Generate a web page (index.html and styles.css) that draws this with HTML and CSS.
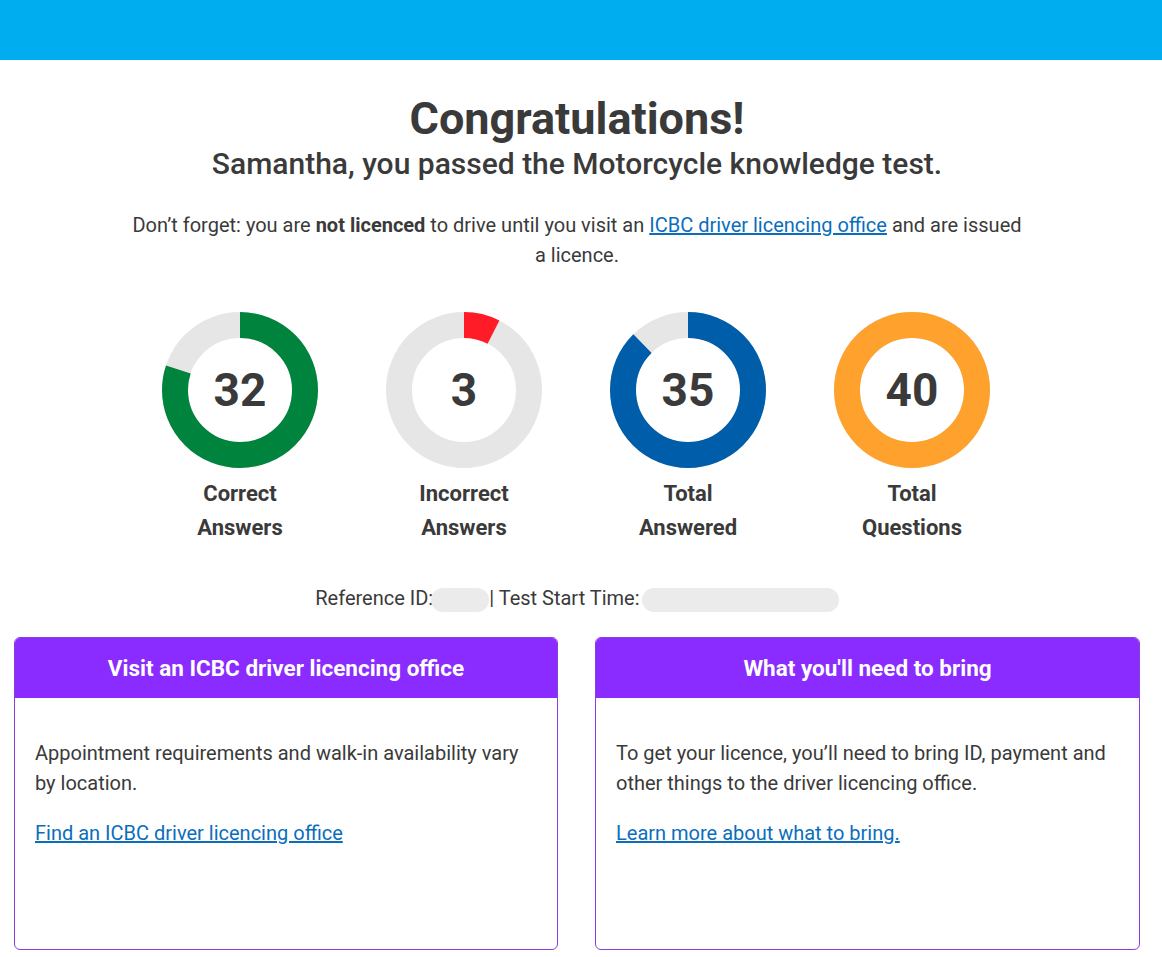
FILE: index.html
```html
<!DOCTYPE html>
<html lang="en">
<head>
    <meta charset="UTF-8">
    <meta name="viewport" content="width=device-width, initial-scale=1.0">
    <title>Knowledge Test Results</title>
    <link rel="stylesheet" href="styles.css">
</head>
<body>
    <header class="topbar"></header>

    <main class="results">
        <h1 class="title">Congratulations!</h1>
        <h2 class="subtitle">Samantha, you passed the Motorcycle knowledge test.</h2>

        <p class="notice">
            Don’t forget: you are <strong>not licenced</strong> to drive until you visit an
            <a href="#">ICBC driver licencing office</a> and are issued a licence.
        </p>

        <div class="stats">
            <div class="stat">
                <div class="donut">
                    <svg viewBox="0 0 156 156">
                        <circle class="track" cx="78" cy="78" r="65"></circle>
                        <circle class="arc green" cx="78" cy="78" r="65" stroke-dasharray="326.7 408.4"></circle>
                    </svg>
                    <span class="donut-value">32</span>
                </div>
                <div class="stat-label">Correct<br>Answers</div>
            </div>
            <div class="stat">
                <div class="donut">
                    <svg viewBox="0 0 156 156">
                        <circle class="track" cx="78" cy="78" r="65"></circle>
                        <circle class="arc red" cx="78" cy="78" r="65" stroke-dasharray="30.6 408.4"></circle>
                    </svg>
                    <span class="donut-value">3</span>
                </div>
                <div class="stat-label">Incorrect<br>Answers</div>
            </div>
            <div class="stat">
                <div class="donut">
                    <svg viewBox="0 0 156 156">
                        <circle class="track" cx="78" cy="78" r="65"></circle>
                        <circle class="arc blue" cx="78" cy="78" r="65" stroke-dasharray="357.4 408.4"></circle>
                    </svg>
                    <span class="donut-value">35</span>
                </div>
                <div class="stat-label">Total<br>Answered</div>
            </div>
            <div class="stat">
                <div class="donut">
                    <svg viewBox="0 0 156 156">
                        <circle class="track" cx="78" cy="78" r="65"></circle>
                        <circle class="arc orange" cx="78" cy="78" r="65" stroke-dasharray="408.4 408.4"></circle>
                    </svg>
                    <span class="donut-value">40</span>
                </div>
                <div class="stat-label">Total<br>Questions</div>
            </div>
        </div>

        <p class="reference">
            Reference ID:<span class="hidden-value short"></span>| Test Start Time: 2<span class="hidden-value long"></span>
        </p>
    </main>

    <section class="cards">
        <div class="card">
            <div class="card-header">Visit an ICBC driver licencing office</div>
            <div class="card-body">
                <p>Appointment requirements and walk-in availability vary by location.</p>
                <p><a href="#">Find an ICBC driver licencing office</a></p>
            </div>
        </div>
        <div class="card">
            <div class="card-header">What you'll need to bring</div>
            <div class="card-body">
                <p>To get your licence, you’ll need to bring ID, payment and other things to the driver licencing office.</p>
                <p><a href="#">Learn more about what to bring.</a></p>
            </div>
        </div>
    </section>
</body>
</html>
```

FILE: styles.css
```css
* {
    margin: 0;
    padding: 0;
    box-sizing: border-box;
}

body {
    font-family: Roboto, 'Liberation Sans', sans-serif;
    color: #3a3a3a;
    background: #fff;
}

a {
    color: #0a6ebd;
    text-decoration: underline;
}

.topbar {
    height: 60px;
    background: #00aeef;
}

.results {
    text-align: center;
    padding: 32px 8px 0 0;
}

.title {
    font-size: 45px;
    font-weight: 700;
    line-height: 54px;
}

.subtitle {
    font-size: 30px;
    font-weight: 500;
    line-height: 36px;
}

.notice {
    max-width: 900px;
    margin: 28px auto 0;
    font-size: 20px;
    line-height: 30px;
}

.notice strong {
    font-weight: 700;
}

.stats {
    display: flex;
    justify-content: center;
    gap: 68px;
    margin-top: 42px;
    margin-left: -2px;
}

.stat {
    width: 156px;
}

.donut {
    position: relative;
    width: 156px;
    height: 156px;
}

.donut svg {
    display: block;
    width: 156px;
    height: 156px;
    transform: rotate(-90deg);
}

.donut circle {
    fill: none;
    stroke-width: 26;
}

.track {
    stroke: #e6e6e6;
}

.arc.green {
    stroke: #00843d;
}

.arc.red {
    stroke: #ff1c27;
}

.arc.blue {
    stroke: #005daa;
}

.arc.orange {
    stroke: #ffa12d;
}

.donut-value {
    position: absolute;
    inset: 0;
    display: flex;
    align-items: center;
    justify-content: center;
    font-size: 46px;
    font-weight: 700;
}

.stat-label {
    margin-top: 9px;
    font-size: 22px;
    font-weight: 700;
    line-height: 34px;
}

.reference {
    margin-top: 40px;
    font-size: 20px;
    line-height: 26px;
}

/* redacted values */
.hidden-value {
    display: inline-block;
    height: 24px;
    vertical-align: middle;
    background: #ebebeb;
    border-radius: 12px;
}

.hidden-value.short {
    width: 58px;
    margin-left: -2px;
}

.hidden-value.long {
    width: 197px;
    margin-left: -14px;
}

.cards {
    display: grid;
    grid-template-columns: 544px 545px;
    gap: 37px;
    padding-left: 14px;
    margin-top: 25px;
}

.card {
    height: 313px;
    border: 1px solid #8a3fd9;
    border-radius: 6px;
    overflow: hidden;
}

.card-header {
    height: 60px;
    display: flex;
    align-items: center;
    justify-content: center;
    background: #8a2bff;
    color: #fff;
    font-size: 22.5px;
    font-weight: 700;
}

.card-body {
    padding: 40px 20px 0;
    font-size: 20px;
    line-height: 30px;
}

.card-body p + p {
    margin-top: 20px;
}
```
